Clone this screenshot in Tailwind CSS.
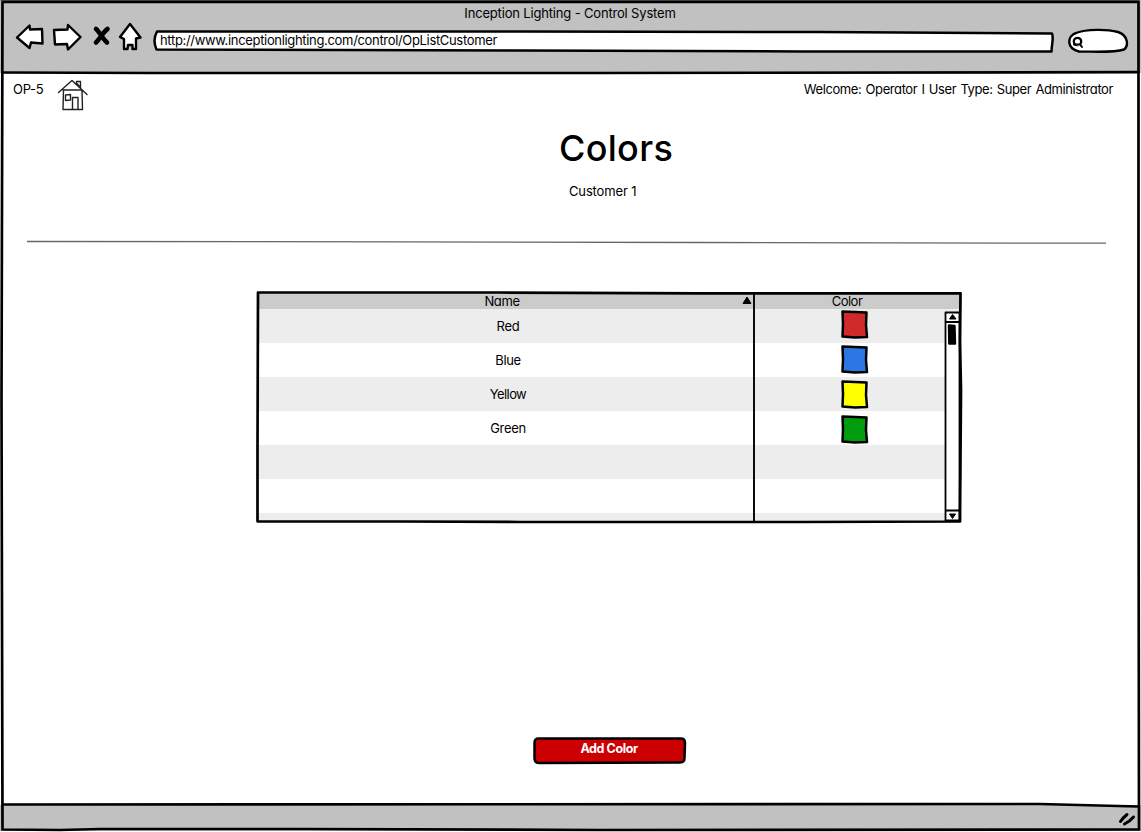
<!DOCTYPE html>
<html lang="en">
<head>
<meta charset="utf-8">
<title>Inception Lighting - Control System</title>
<script src="https://cdn.jsdelivr.net/npm/@tailwindcss/browser@4"></script>
</head>
<body class="bg-white">
<div class="relative flex h-[832px] w-[1141px] flex-col overflow-hidden bg-white font-['Inter','Liberation_Sans',sans-serif] text-[13px] leading-4 text-black [font-feature-settings:'cv11']">

  <!-- browser chrome -->
  <header class="flex h-[73px] shrink-0 flex-col bg-[#c1c1c1] pt-[5px]">
    <div class="h-4 pr-px text-center whitespace-nowrap"><span class="tracking-[-0.17px]">Inception Lighting - Control System</span></div>
    <div class="flex h-[36px] items-start pl-[14px]">
      <svg class="mt-px h-[32px] w-[130px] shrink-0" viewBox="14 22 130 32" fill="#fff" stroke="#000" stroke-width="2.4" stroke-linejoin="round" stroke-linecap="round">
        <path d="M17 37.500 L29.500 25.500 L30 29.500 L42 29 L42.500 43.500 L31 42.500 L29.500 48 Z"/>
        <path d="M54 30 L67.500 29.500 L68 25 L80.500 37 L68 49.500 L67 44 L55 44.500 Z"/>
        <path d="M96 29 C99 31 102 38 107 42.500 M107.500 29 C103 32 100 39 96 42.500" fill="none" stroke-width="4.600"/>
        <path d="M130 24 L140.500 37.500 L136 38.500 L136 49 L132.500 49 L132.500 45 L128 45 L127.500 49 L124 49 L124 39 L120 37 Z"/>
      </svg>
      <div class="relative mt-[8px] ml-[9px] h-[24px] w-[904px] shrink-0">
        <svg class="absolute inset-0 h-[24px] w-[904px]" viewBox="153 29 904 24" fill="#fff" stroke="#000" stroke-width="2.500" stroke-linejoin="round"><path d="M157 31.500 L520 31.500 L820 32 L1052 33.500 C1054 38 1051.500 45 1051.500 51.500 L800 51.500 L520 50.500 L156.500 49.500 C154 44 154 37 157 31.500 Z"/></svg>
        <span class="absolute top-[3px] left-[7px] tracking-[-0.33px] whitespace-nowrap">http://www.inceptionlighting.com/control/OpListCustomer</span>
      </div>
      <svg class="mt-[6px] ml-[10px] h-[28px] w-[64px] shrink-0" viewBox="1067 27 64 28" fill="#fff" stroke="#000" stroke-width="2.400" stroke-linecap="round"><path d="M1079 51.500 C1066 48 1067 36 1076 33 C1086 29 1107 29 1118 32 C1128 35 1129 46 1124 49.500 C1113 53 1095 51.500 1079 51.500 Z"/><circle cx="1077.500" cy="41.500" r="3.700" stroke-width="2.300"/><path d="M1074 44.500 L1080 44.500 L1082 47" stroke-width="2"/></svg>
    </div>
  </header>

  <!-- page -->
  <main class="flex h-[732px] shrink-0 flex-col">
    <div class="flex h-[52px] items-start pr-[28px] pl-[13px]">
      <span class="mt-[8px] w-[44px] tracking-[-0.3px]">OP-5</span>
      <svg class="mt-[5px] h-[34px] w-[32px]" viewBox="57 78 32 34" fill="none" stroke="#222" stroke-width="1.400" stroke-linecap="round" stroke-linejoin="round"><path d="M58.500 92.500 L72 80.500 L87 94.500 M63 90 L82 90 M63.500 90 L63 109.500 L82.500 109.500 L82 90 M76.500 83 L76.500 81.500 L80.500 81.500 L80.500 88 M76.500 83 L80 87 M65.500 95 L70.500 94.500 L70.500 100 L65.500 100.500 Z M72.500 109 L72.500 97.500 L78 97.500 L78 109"/></svg>
      <span class="mt-[8px] ml-auto tracking-[-0.41px] [word-spacing:1px] whitespace-nowrap">Welcome: Operator I User Type: Super Administrator</span>
    </div>
    <h1 class="h-[46px] pl-[559px] text-[36px] leading-[46px] font-[450] tracking-[0.3px]">Colors</h1>
    <p class="mt-[12px] pl-[569px] tracking-[-0.15px]">Customer 1</p>
    <svg class="mt-[41px] ml-[26px] h-[5px] w-[1081px] shrink-0" viewBox="26 240 1081 5" fill="none" stroke="#666" stroke-width="1.300"><path d="M27 241.500 L400 241.800 L700 242.500 L1106 243.200"/></svg>

    <section class="relative mt-[46px] ml-[256px] flex h-[233px] w-[707px] shrink-0 flex-col overflow-hidden pt-px pr-px pb-px pl-px">
      <div class="flex h-[17px] shrink-0 bg-[#cbcbcb]"><span class="w-[490px] pt-px text-center tracking-[-0.4px]">Name</span><span class="w-[200px] pt-px text-center tracking-[-0.5px]">Color</span></div>
      <div class="flex h-[34px] shrink-0 items-center bg-[#ededed]"><span class="w-[502px] text-center tracking-[-0.2px]">Red</span></div>
      <div class="flex h-[34px] shrink-0 items-center bg-white"><span class="w-[502px] text-center tracking-[-0.4px]">Blue</span></div>
      <div class="flex h-[34px] shrink-0 items-center bg-[#ededed]"><span class="w-[502px] text-center tracking-[-0.6px]">Yellow</span></div>
      <div class="flex h-[34px] shrink-0 items-center bg-white"><span class="w-[502px] text-center tracking-[-0.35px]">Green</span></div>
      <div class="h-[34px] shrink-0 bg-[#ededed]"></div>
      <div class="h-[34px] shrink-0 bg-white"></div>
      <div class="h-[9px] shrink-0 bg-[#ededed]"></div>
      <svg class="absolute inset-0 h-[233px] w-[707px]" viewBox="256 291 707 233" fill="none" stroke="#000" stroke-width="2.700" stroke-linejoin="round">
        <g stroke-width="2.500">
          <path fill="#d02a2a" d="M842.500 311.500 L855 312 L866.500 312.500 L866 325 L867 337 L855 337.500 L842.500 336.500 L843 324 Z"/>
          <path fill="#2b78e4" d="M842.500 346.500 L855 347 L866.500 347.500 L866 360 L867 372 L855 372.500 L842.500 371.500 L843 359 Z"/>
          <path fill="#ffff00" d="M842.500 381.500 L855 382 L866.500 382.500 L866 395 L867 407 L855 407.500 L842.500 406.500 L843 394 Z"/>
          <path fill="#009e0f" d="M842.500 416.500 L855 417 L866.500 417.500 L866 430 L867 442 L855 442.500 L842.500 441.500 L843 429 Z"/>
        </g>
        <path fill="#fff" stroke-width="1.800" d="M945.500 312.500 L959.500 312.500 L959.500 520.500 L945.500 520.500 Z M945.500 322 L959.500 322 M945.500 510.500 L959.500 510.500"/>
        <path fill="#000" stroke-width="1" d="M949.500 319 L952.500 314.500 L956 319 Z M949.500 514 L955.500 514 L952.500 518.500 Z M743 303.500 L747 297 L751 303.500 Z"/>
        <path fill="#000" stroke-width="2.400" d="M949 325.500 L954.500 326 L955 343.500 L949.300 343.500 Z"/>
        <path stroke-width="1.900" d="M754 292 L754 521"/>
        <path d="M258 292.500 L500 292.500 L700 293.300 L960.500 293.300 L960 340 L961 390 L960 521.500 L800 522 L520 522 L400 521.500 L257.500 521.300 L257.500 450 L258 292.500 Z"/>
      </svg>
    </section>

    <button class="relative mt-[212px] ml-[532px] flex h-[30px] w-[155px] shrink-0 justify-center">
      <svg class="absolute inset-0 h-[30px] w-[155px]" viewBox="532 736 155 30" fill="#c00" stroke="#000" stroke-width="2.500"><path d="M538.500 738.500 L681 738.500 Q685 738.500 685 743 L684.500 758 Q684.500 762.500 680 762.500 L539 763 Q534.500 763 534.500 758 L534.500 743 Q534.500 738.500 538.500 738.500 Z"/></svg>
      <span class="relative mt-[5px] -ml-[1px] text-[12.5px] leading-4 font-bold tracking-[-0.4px] whitespace-nowrap text-white">Add Color</span>
    </button>
  </main>

  <!-- status bar -->
  <footer class="h-[26px] shrink-0 bg-[#c1c1c1]"></footer>

  <!-- hand-drawn window frame and resize grip -->
  <svg class="pointer-events-none absolute inset-0 h-[832px] w-[1141px]" viewBox="0 0 1141 832" fill="none" stroke="#000" stroke-width="2.700" stroke-linecap="round">
    <path stroke="#555" stroke-width="1" d="M1 0.500 L1139 0.500"/>
    <path d="M2.500 2 L1138.500 2 L1138.500 400 L1139 829.500 L600 830 L300 829 L100 829 L60 830 L2.500 829.500 L1.500 400 L2.500 2"/>
    <path d="M3 72.500 L150 73 L600 73 L1138 72.200"/>
    <path d="M3 804.500 L1040 804 L1138 806.500"/>
    <path stroke-width="3" d="M1120.500 821.500 C1122 819 1124 817 1127 814.500 M1124.500 824 C1127.500 822.500 1131 820 1133.500 817"/>
  </svg>
</div>
</body>
</html>
